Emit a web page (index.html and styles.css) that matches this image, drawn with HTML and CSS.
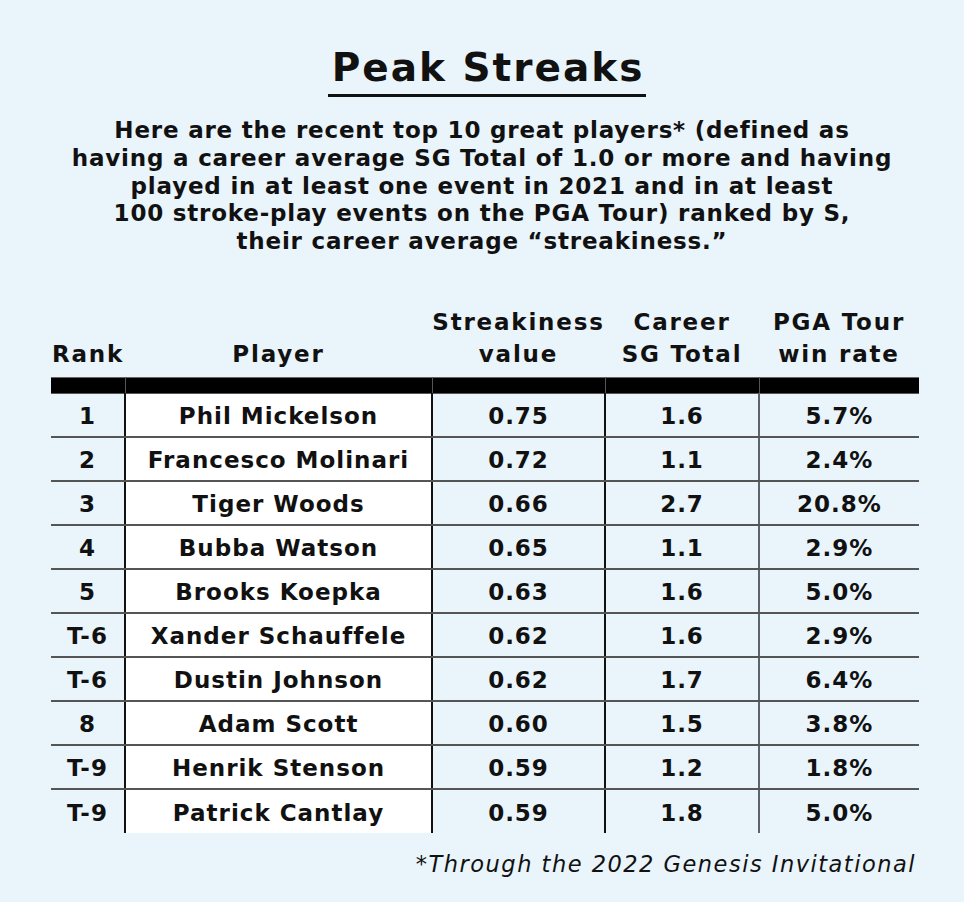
FILE: index.html
```html
<!DOCTYPE html>
<html lang="en">
<head>
<meta charset="utf-8">
<title>Peak Streaks</title>
<link rel="stylesheet" href="styles.css">
</head>
<body>
<main class="page">
  <header class="head">
    <h1 class="title">Peak Streaks</h1>
    <p class="intro">Here are the recent top 10 great players* (defined as<br>having a career average SG Total of 1.0 or more and having<br>played in at least one event in 2021 and in at least<br>100 stroke-play events on the PGA Tour) ranked by S,<br>their career average “streakiness.”</p>
  </header>
  <table class="grid">
    <colgroup>
      <col class="c-rank"><col class="c-player"><col class="c-streak"><col class="c-sg"><col class="c-win">
    </colgroup>
    <thead>
      <tr class="labels">
        <th>Rank</th>
        <th>Player</th>
        <th>Streakiness<br>value</th>
        <th>Career<br>SG Total</th>
        <th>PGA Tour<br>win rate</th>
      </tr>
      <tr class="bar">
        <th></th><th></th><th></th><th></th><th></th>
      </tr>
    </thead>
    <tbody>
      <tr><td>1</td><td class="name">Phil Mickelson</td><td>0.75</td><td>1.6</td><td>5.7%</td></tr>
      <tr><td>2</td><td class="name">Francesco Molinari</td><td>0.72</td><td>1.1</td><td>2.4%</td></tr>
      <tr><td>3</td><td class="name">Tiger Woods</td><td>0.66</td><td>2.7</td><td>20.8%</td></tr>
      <tr><td>4</td><td class="name">Bubba Watson</td><td>0.65</td><td>1.1</td><td>2.9%</td></tr>
      <tr><td>5</td><td class="name">Brooks Koepka</td><td>0.63</td><td>1.6</td><td>5.0%</td></tr>
      <tr><td>T-6</td><td class="name">Xander Schauffele</td><td>0.62</td><td>1.6</td><td>2.9%</td></tr>
      <tr><td>T-6</td><td class="name">Dustin Johnson</td><td>0.62</td><td>1.7</td><td>6.4%</td></tr>
      <tr><td>8</td><td class="name">Adam Scott</td><td>0.60</td><td>1.5</td><td>3.8%</td></tr>
      <tr><td>T-9</td><td class="name">Henrik Stenson</td><td>0.59</td><td>1.2</td><td>1.8%</td></tr>
      <tr><td>T-9</td><td class="name">Patrick Cantlay</td><td>0.59</td><td>1.8</td><td>5.0%</td></tr>
    </tbody>
  </table>
  <p class="note">*Through the 2022 Genesis Invitational</p>
</main>
</body>
</html>
```

FILE: styles.css
```css
* { box-sizing: border-box; }

html, body {
  margin: 0;
  padding: 0;
  background: #e9f4fb;
}

body {
  font-family: "DejaVu Sans", Inter, sans-serif;
  color: #111;
}

.page {
  width: 964px;
  height: 902px;
  padding-top: 46px;
}

.head {
  display: flex;
  flex-direction: column;
  align-items: center;
}

.title {
  margin: 0 0 0 10px;
  font-size: 39px;
  line-height: 44px;
  font-weight: 700;
  letter-spacing: 2px;
  padding: 0 2px 4px 4px;
  border-bottom: 3px solid #111;
}

.intro {
  margin: 20px 0 0;
  text-align: center;
  font-size: 23px;
  line-height: 27.8px;
  font-weight: 700;
  letter-spacing: 0.8px;
}

.grid {
  margin: 50px 0 0 51px;
  width: 868px;
  border-collapse: collapse;
  table-layout: fixed;
}

.c-rank { width: 74px; }
.c-player { width: 307px; }
.c-streak { width: 173px; }
.c-sg { width: 154px; }
.c-win { width: 160px; }

.labels th {
  vertical-align: bottom;
  font-size: 23px;
  line-height: 32px;
  font-weight: 700;
  letter-spacing: 1.8px;
  padding: 0 0 7px;
  text-align: center;
}

.bar th {
  height: 16px;
  padding: 0;
  background: #000;
  border-top: 1px solid #666;
  border-bottom: 1px solid #555;
  border-right: 1px solid #555;
}

.bar th:last-child { border-right: 0; }

tbody td {
  height: 44px;
  padding: 2px 0 0;
  text-align: center;
  font-size: 23px;
  font-weight: 700;
  letter-spacing: 1px;
  border-bottom: 2px solid #555;
  border-right: 2px solid #111;
}

tbody td:nth-child(4) { border-right-color: #5f6468; }
tbody td:last-child { border-right: 0; }
tbody tr:last-child td { border-bottom: 0; }

tbody td.name { background: #fff; }

.note {
  margin: 18px 48px 0 0;
  text-align: right;
  font-size: 22.5px;
  font-style: italic;
  font-weight: 400;
  letter-spacing: 1.5px;
}
```
